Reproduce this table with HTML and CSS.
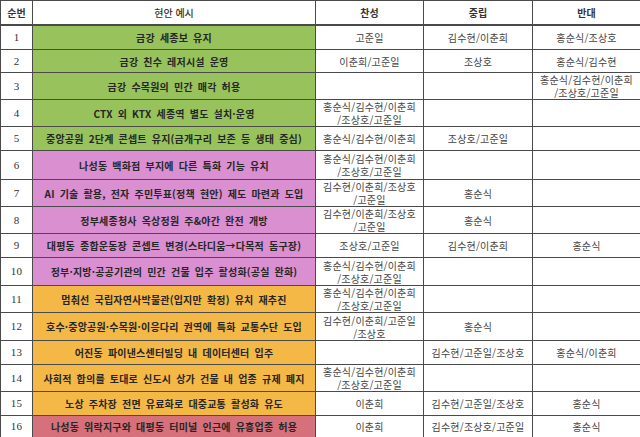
FILE: index.html
```html
<!DOCTYPE html>
<html lang="ko">
<head>
<meta charset="utf-8">
<link rel="stylesheet" href="styles.css">
</head>
<body>
<table class="vote">
  <colgroup>
    <col class="c-no"><col class="c-issue"><col class="c-yes"><col class="c-mid"><col class="c-no2">
  </colgroup>
  <thead>
    <tr><th>순번</th><th class="th-plain">현안 예시</th><th>찬성</th><th>중립</th><th>반대</th></tr>
  </thead>
  <tbody>
    <tr class="green"><td class="num">1</td><td class="issue">금강 세종보 유지</td><td>고준일</td><td>김수현/이춘희</td><td>홍순식/조상호</td></tr>
    <tr class="green"><td class="num">2</td><td class="issue">금강 친수 레저시설 운영</td><td>이춘희/고준일</td><td>조상호</td><td>홍순식/김수현</td></tr>
    <tr class="green"><td class="num">3</td><td class="issue">금강 수목원의 민간 매각 허용</td><td></td><td></td><td>홍순식/김수현/이춘희<br>/조상호/고준일</td></tr>
    <tr class="green"><td class="num">4</td><td class="issue">CTX 외 KTX 세종역 별도 설치·운영</td><td>홍순식/김수현/이춘희<br>/조상호/고준일</td><td></td><td></td></tr>
    <tr class="green"><td class="num">5</td><td class="issue">중앙공원 2단계 콘셉트 유지(금개구리 보존 등 생태 중심)</td><td>홍순식/김수현/이춘희</td><td>조상호/고준일</td><td></td></tr>
    <tr class="pink"><td class="num">6</td><td class="issue">나성동 백화점 부지에 다른 특화 기능 유치</td><td>홍순식/김수현/이춘희<br>/조상호/고준일</td><td></td><td></td></tr>
    <tr class="pink"><td class="num">7</td><td class="issue">AI 기술 활용, 전자 주민투표(정책 현안) 제도 마련과 도입</td><td>김수현/이춘희/조상호<br>/고준일</td><td>홍순식</td><td></td></tr>
    <tr class="pink"><td class="num">8</td><td class="issue">정부세종청사 옥상정원 주&amp;야간 완전 개방</td><td>김수현/이춘희/조상호<br>/고준일</td><td>홍순식</td><td></td></tr>
    <tr class="pink"><td class="num">9</td><td class="issue">대평동 종합운동장 콘셉트 변경(스타디움→다목적 돔구장)</td><td>조상호/고준일</td><td>김수현/이춘희</td><td>홍순식</td></tr>
    <tr class="pink"><td class="num">10</td><td class="issue">정부·지방·공공기관의 민간 건물 입주 활성화(공실 완화)</td><td>홍순식/김수현/이춘희<br>/조상호/고준일</td><td></td><td></td></tr>
    <tr class="orange"><td class="num">11</td><td class="issue">멈춰선 국립자연사박물관(입지만 확정) 유치 재추진</td><td>홍순식/김수현/이춘희<br>/조상호/고준일</td><td></td><td></td></tr>
    <tr class="orange"><td class="num">12</td><td class="issue">호수·중앙공원·수목원·이응다리 권역에 특화 교통수단 도입</td><td>김수현/이춘희/고준일<br>/조상호</td><td>홍순식</td><td></td></tr>
    <tr class="orange"><td class="num">13</td><td class="issue">어진동 파이낸스센터빌딩 내 데이터센터 입주</td><td></td><td>김수현/고준일/조상호</td><td>홍순식/이춘희</td></tr>
    <tr class="orange"><td class="num">14</td><td class="issue">사회적 합의를 토대로 신도시 상가 건물 내 업종 규제 폐지</td><td>홍순식/김수현/이춘희<br>/조상호/고준일</td><td></td><td></td></tr>
    <tr class="orange"><td class="num">15</td><td class="issue">노상 주차장 전면 유료화로 대중교통 활성화 유도</td><td>이춘희</td><td>김수현/고준일/조상호</td><td>홍순식</td></tr>
    <tr class="red"><td class="num">16</td><td class="issue">나성동 위락지구와 대평동 터미널 인근에 유흥업종 허용</td><td>이춘희</td><td>김수현/조상호/고준일</td><td>홍순식</td></tr>
  </tbody>
</table>
</body>
</html>
```

FILE: styles.css
```css
html, body {
  margin: 0;
  padding: 0;
  background: #ffffff;
}

.vote {
  border-collapse: collapse;
  table-layout: fixed;
  width: 640px;
  font-family: "Noto Sans CJK KR", "Noto Sans", sans-serif;
  font-size: 10px;
  color: #444;
}

.c-no { width: 32px; }
.c-issue { width: 283px; }
.c-yes { width: 108px; }
.c-mid { width: 109px; }
.c-no2 { width: 108px; }

.vote th,
.vote td {
  border: 1px solid #4a4a4a;
  text-align: center;
  vertical-align: middle;
  padding: 0 1px;
  line-height: 13px;
  white-space: nowrap;
  overflow: hidden;
}

.vote th {
  height: 23px;
  font-weight: 700;
  color: #333;
  border-bottom: 2px solid #4a4a4a;
}

.vote th.th-plain {
  font-weight: 500;
}

.vote td {
  height: 23px;
  letter-spacing: 0.2px;
}

.vote td.num {
  font-family: "Liberation Serif", "DejaVu Serif", serif;
  font-size: 11px;
  color: #333;
  background: #fff;
}

.vote td.issue {
  font-weight: 700;
  color: #262626;
  word-spacing: 2px;
}

.vote tbody tr:nth-child(2) td { height: 22px; }
.vote tbody tr:nth-child(3) td,
.vote tbody tr:nth-child(4) td,
.vote tbody tr:nth-child(7) td,
.vote tbody tr:nth-child(8) td,
.vote tbody tr:nth-child(11) td,
.vote tbody tr:nth-child(14) td { height: 26px; }
.vote tbody tr:nth-child(6) td { height: 28px; }
.vote tbody tr:nth-child(10) td,
.vote tbody tr:nth-child(12) td { height: 27px; }
.vote tbody tr:nth-child(16) td { height: 21px; }

.green td.issue { background: #98c35c; }
.pink td.issue { background: #d98fd0; }
.orange td.issue { background: #f3b845; }
.red td.issue { background: #d6707a; }
```
